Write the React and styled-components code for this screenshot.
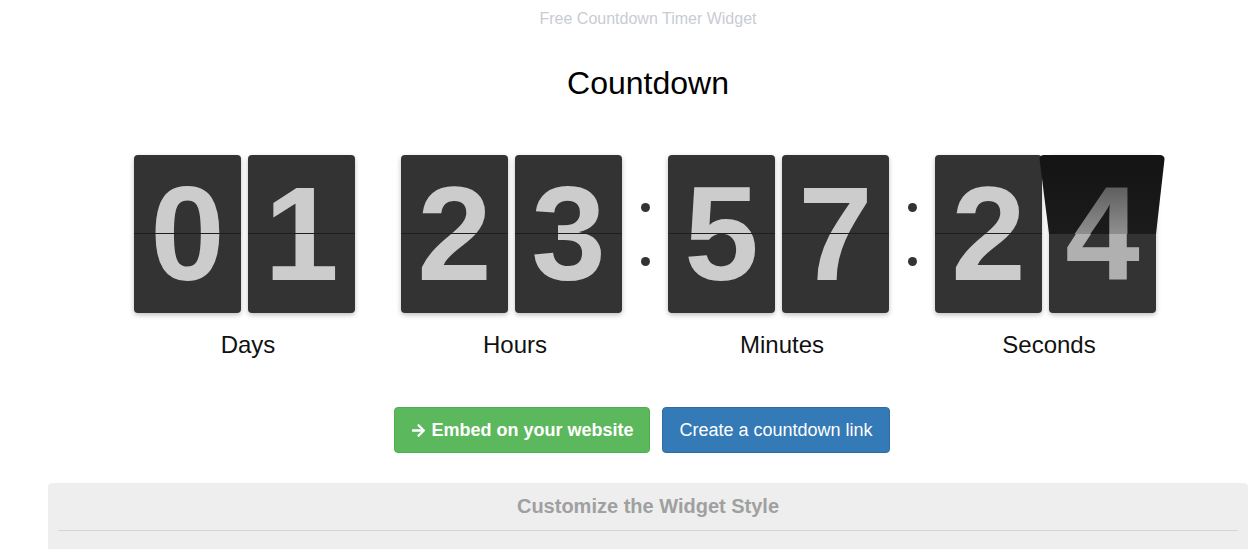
import styled, { createGlobalStyle } from "styled-components";
import { FaArrowRight } from "react-icons/fa";

const GlobalStyle = createGlobalStyle`
  html, body {
    margin: 0;
    padding: 0;
    background: #fff;
    font-family: "Liberation Sans", Arial, Helvetica, sans-serif;
    overflow: hidden;
  }
`;

const Page = styled.div`
  width: 1200px;
  margin-left: 48px;
  display: flex;
  flex-direction: column;
  align-items: center;
`;

const Tagline = styled.div`
  margin-top: 9px;
  font-size: 16px;
  line-height: 20px;
  color: #c8ccd3;
`;

const Title = styled.h1`
  margin: 34px 0 0;
  font-size: 32px;
  font-weight: 400;
  line-height: 40px;
  color: #000;
`;

const Timer = styled.div`
  margin-top: 52px;
  margin-left: -6px;
  display: flex;
  align-items: flex-start;
`;

const Group = styled.div`
  display: flex;
  flex-direction: column;
  align-items: center;
`;

const Cards = styled.div`
  display: flex;
  gap: 7px;
`;

const Card = styled.div`
  position: relative;
  width: 107px;
  height: 158px;
  border-radius: 4px;
  background: #333;
  box-shadow: 0 2px 5px rgba(0, 0, 0, 0.25);
  display: flex;
  justify-content: center;
  font-size: 134px;
  font-weight: 700;
  line-height: 158px;
  color: ${(p) => (p.$dim ? "#b0b0b0" : "#ccc")};

  &::after {
    content: "";
    position: absolute;
    left: 0;
    right: 0;
    top: 78px;
    height: 1px;
    background: #1e1e1e;
  }
`;

const Flap = styled.div`
  position: absolute;
  left: -10px;
  right: -9px;
  top: 0;
  height: 79px;
  overflow: hidden;
  z-index: 2;
  border-radius: 5px 5px 0 0;
  background: linear-gradient(#141414, #1b1b1b);
  clip-path: polygon(0 0, 100% 0, calc(100% - 9px) 100%, 10px 100%);
  display: flex;
  justify-content: center;
  padding-left: 10px;
  padding-right: 9px;
  box-sizing: border-box;
`;

const FlapDigit = styled.span`
  display: block;
  height: 158px;
  line-height: 158px;
  background: linear-gradient(#5e5e5e 20%, #8f8f8f 50%);
  -webkit-background-clip: text;
  background-clip: text;
  color: transparent;
  transform: scaleX(1.04);
`;

const Label = styled.div`
  margin-top: 18px;
  padding-left: 7px;
  font-size: 24px;
  line-height: 28px;
  color: #111;
`;

const Sep = styled.div`
  width: 46px;
  height: 158px;
  display: flex;
  flex-direction: column;
  align-items: center;
  justify-content: center;
  gap: 45px;
`;

const Dot = styled.span`
  width: 9px;
  height: 9px;
  border-radius: 50%;
  background: ${(p) => (p.$hidden ? "transparent" : "#333")};
`;

const Buttons = styled.div`
  margin-top: 48px;
  margin-left: -12px;
  display: flex;
  gap: 12px;
`;

const Button = styled.button`
  height: 46px;
  padding: 0 16px;
  border-radius: 4px;
  border: 1px solid ${(p) => (p.$green ? "#4cae4c" : "#2e6da4")};
  background: ${(p) => (p.$green ? "#5cb85c" : "#337ab7")};
  color: #fff;
  font-family: "Liberation Sans", Arial, sans-serif;
  font-size: 18px;
  font-weight: ${(p) => (p.$green ? 700 : 400)};
  display: flex;
  align-items: center;
  gap: 5px;
  cursor: pointer;

  svg {
    font-size: 15px;
  }
`;

const Panel = styled.div`
  align-self: stretch;
  margin-top: 30px;
  height: 80px;
  background: #eee;
  border-radius: 4px 4px 0 0;
  padding: 0 10px;
`;

const PanelTitle = styled.div`
  height: 47px;
  border-bottom: 1px solid #d5d5d5;
  display: flex;
  align-items: center;
  justify-content: center;
  font-size: 20px;
  font-weight: 700;
  color: #a0a0a0;
`;

const units = [
  { label: "Days", digits: "01" },
  { label: "Hours", digits: "23" },
  { label: "Minutes", digits: "57" },
  { label: "Seconds", digits: "24", flip: true },
];

export default function App() {
  return (
    <>
      <GlobalStyle />
      <Page>
        <Tagline>Free Countdown Timer Widget</Tagline>
        <Title>Countdown</Title>
        <Timer>
          {units.map((u, i) => (
            <Group key={u.label} style={{ display: "contents" }}>
              {i > 0 && (
                <Sep>
                  <Dot $hidden={i === 1} />
                  <Dot $hidden={i === 1} />
                </Sep>
              )}
              <Group>
                <Cards>
                  {u.digits.split("").map((d, j) => {
                    const flipping = u.flip && j === 1;
                    return (
                      <Card key={j} $dim={flipping}>
                        {d}
                        {flipping && (
                          <Flap aria-hidden="true">
                            <FlapDigit>{d}</FlapDigit>
                          </Flap>
                        )}
                      </Card>
                    );
                  })}
                </Cards>
                <Label>{u.label}</Label>
              </Group>
            </Group>
          ))}
        </Timer>
        <Buttons>
          <Button $green>
            <FaArrowRight />
            Embed on your website
          </Button>
          <Button>Create a countdown link</Button>
        </Buttons>
        <Panel>
          <PanelTitle>Customize the Widget Style</PanelTitle>
        </Panel>
      </Page>
    </>
  );
}
